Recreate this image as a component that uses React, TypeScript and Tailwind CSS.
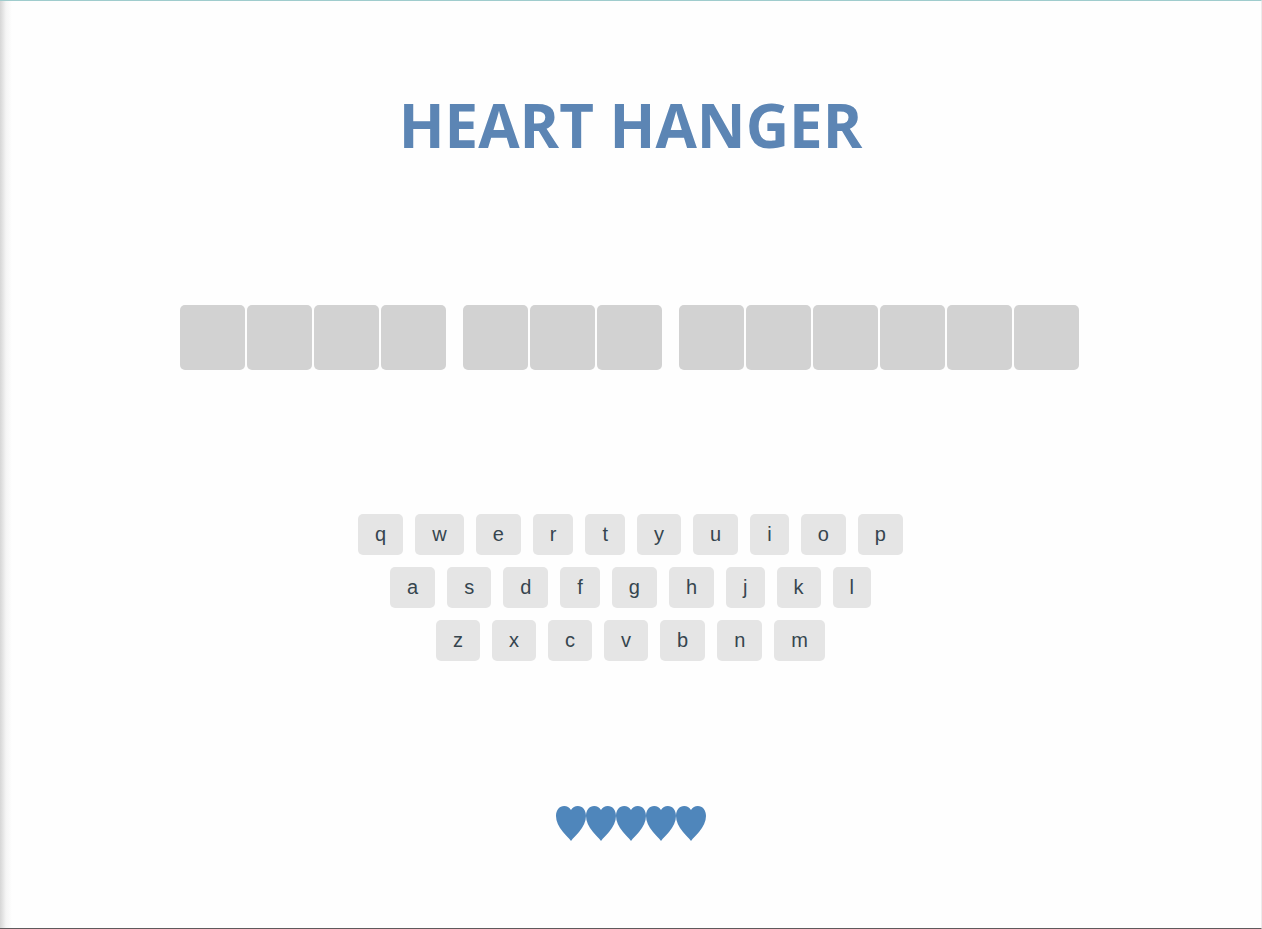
const WORDS = [4, 3, 6];
const ROWS = ["qwertyuiop", "asdfghjkl", "zxcvbnm"];
const LIVES = 5;

function Heart() {
  return (
    <svg viewBox="0 0 30 35" className="h-[35px] w-[30px] fill-[#4f86bb]" aria-hidden="true">
      <path d="M15 4C13.4 1.3 11 0 8.2 0C3.4 0 0 4 0 10C0 15.5 2.6 20.5 7 26C10 29.6 12.8 32 15 35C17.2 32 20 29.6 23 26C27.4 20.5 30 15.5 30 10C30 4 26.6 0 21.8 0C19 0 16.6 1.3 15 4Z" />
    </svg>
  );
}

function Word({ length }: { length: number }) {
  return (
    <div className="flex gap-[2px]">
      {Array.from({ length }, (_, i) => (
        <div key={i} className="size-[65px] rounded-[5px] bg-[#d2d2d2]" />
      ))}
    </div>
  );
}

function Keyboard() {
  return (
    <div className="flex flex-col items-center gap-3">
      {ROWS.map((row) => (
        <div key={row} className="flex gap-3">
          {row.split("").map((letter) => (
            <button
              key={letter}
              type="button"
              className="h-[41px] rounded-[5px] bg-[#e5e5e5] px-[17px] text-[20px] leading-[41px] text-[#36454f]"
            >
              {letter}
            </button>
          ))}
        </div>
      ))}
    </div>
  );
}

export default function App() {
  return (
    <div className="flex min-h-screen border-t border-r border-b border-t-[#9fcccd] border-r-[#ececec] border-b-[#5f5a5c] bg-[#fefefe] font-['Liberation_Sans',Arial,sans-serif]">
      <div className="w-3 shrink-0 bg-linear-to-r from-[#d6d6d6] via-[#f5f5f5] via-50% to-[#fefefe]" />
      <main className="flex grow flex-col items-center pt-[84px] pr-3 pb-[87px]">
        <h1 className="font-['Open_Sans',sans-serif] text-[60px] leading-[80px] font-bold text-[#5c85b4]">
          HEART HANGER
        </h1>
        <section aria-label="Secret phrase" className="mt-[140px] flex gap-[17px] pr-[2px]">
          {WORDS.map((length, i) => (
            <Word key={i} length={length} />
          ))}
        </section>
        <section aria-label="Keyboard" className="mt-36">
          <Keyboard />
        </section>
        <section aria-label="Lives" className="mt-[145px] flex">
          {Array.from({ length: LIVES }, (_, i) => (
            <Heart key={i} />
          ))}
        </section>
      </main>
    </div>
  );
}
